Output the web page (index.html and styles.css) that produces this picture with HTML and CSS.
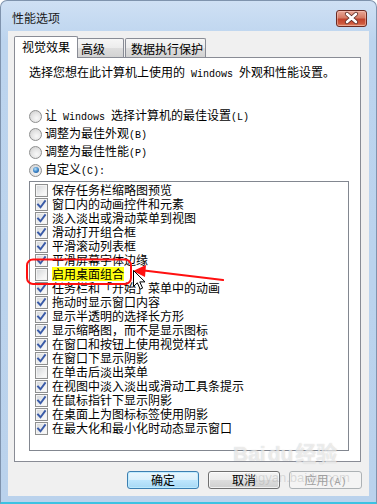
FILE: index.html
```html
<!DOCTYPE html>
<html lang="zh-CN">
<head>
<meta charset="utf-8">
<title>性能选项</title>
<link rel="stylesheet" href="styles.css">
</head>
<body>
<div class="window">
  <div class="titlebar">
    <span class="title">性能选项</span>
    <div class="close">
      <svg width="31" height="17" viewBox="0 0 31 17">
        <path d="M11 4 L20 12 M20 4 L11 12" stroke="#5a2a24" stroke-width="4.2" stroke-linecap="round"/>
        <path d="M11 4 L20 12 M20 4 L11 12" stroke="#ffffff" stroke-width="2.6" stroke-linecap="round"/>
      </svg>
    </div>
  </div>
  <div class="client">
    <div class="tabs">
      <div class="tab active">视觉效果</div>
      <div class="tab t2">高级</div>
      <div class="tab t3">数据执行保护</div>
    </div>
    <div class="panel">
      <p class="desc">选择您想在此计算机上使用的<span class="lat"> Windows </span>外观和性能设置。</p>
      <div class="radios">
        <div class="radio"><span class="rb"></span><span class="lbl">让<span class="lat"> Windows </span>选择计算机的最佳设置<span class="lat">(L)</span></span></div>
        <div class="radio"><span class="rb"></span><span class="lbl">调整为最佳外观<span class="lat">(B)</span></span></div>
        <div class="radio"><span class="rb"></span><span class="lbl">调整为最佳性能<span class="lat">(P)</span></span></div>
        <div class="radio"><span class="rb on"></span><span class="lbl">自定义<span class="lat">(C):</span></span></div>
      </div>
      <div class="list">
        <div class="row"><span class="cb"></span>保存任务栏缩略图预览</div>
        <div class="row"><span class="cb"><svg class="ck" viewBox="0 0 11 11"><path d="M2 5.5 L4.5 8.2 L9 2.2"/></svg></span>窗口内的动画控件和元素</div>
        <div class="row"><span class="cb"><svg class="ck" viewBox="0 0 11 11"><path d="M2 5.5 L4.5 8.2 L9 2.2"/></svg></span>淡入淡出或滑动菜单到视图</div>
        <div class="row"><span class="cb"><svg class="ck" viewBox="0 0 11 11"><path d="M2 5.5 L4.5 8.2 L9 2.2"/></svg></span>滑动打开组合框</div>
        <div class="row"><span class="cb"><svg class="ck" viewBox="0 0 11 11"><path d="M2 5.5 L4.5 8.2 L9 2.2"/></svg></span>平滑滚动列表框</div>
        <div class="row"><span class="cb"><svg class="ck" viewBox="0 0 11 11"><path d="M2 5.5 L4.5 8.2 L9 2.2"/></svg></span>平滑屏幕字体边缘</div>
        <div class="row"><span class="cb"></span><span class="hl">启用桌面组合</span></div>
        <div class="row"><span class="cb"><svg class="ck" viewBox="0 0 11 11"><path d="M2 5.5 L4.5 8.2 L9 2.2"/></svg></span>任务栏和「开始」菜单中的动画</div>
        <div class="row"><span class="cb"><svg class="ck" viewBox="0 0 11 11"><path d="M2 5.5 L4.5 8.2 L9 2.2"/></svg></span>拖动时显示窗口内容</div>
        <div class="row"><span class="cb"><svg class="ck" viewBox="0 0 11 11"><path d="M2 5.5 L4.5 8.2 L9 2.2"/></svg></span>显示半透明的选择长方形</div>
        <div class="row"><span class="cb"><svg class="ck" viewBox="0 0 11 11"><path d="M2 5.5 L4.5 8.2 L9 2.2"/></svg></span>显示缩略图，而不是显示图标</div>
        <div class="row"><span class="cb"><svg class="ck" viewBox="0 0 11 11"><path d="M2 5.5 L4.5 8.2 L9 2.2"/></svg></span>在窗口和按钮上使用视觉样式</div>
        <div class="row"><span class="cb"><svg class="ck" viewBox="0 0 11 11"><path d="M2 5.5 L4.5 8.2 L9 2.2"/></svg></span>在窗口下显示阴影</div>
        <div class="row"><span class="cb"></span>在单击后淡出菜单</div>
        <div class="row"><span class="cb"><svg class="ck" viewBox="0 0 11 11"><path d="M2 5.5 L4.5 8.2 L9 2.2"/></svg></span>在视图中淡入淡出或滑动工具条提示</div>
        <div class="row"><span class="cb"><svg class="ck" viewBox="0 0 11 11"><path d="M2 5.5 L4.5 8.2 L9 2.2"/></svg></span>在鼠标指针下显示阴影</div>
        <div class="row"><span class="cb"><svg class="ck" viewBox="0 0 11 11"><path d="M2 5.5 L4.5 8.2 L9 2.2"/></svg></span>在桌面上为图标标签使用阴影</div>
        <div class="row"><span class="cb"><svg class="ck" viewBox="0 0 11 11"><path d="M2 5.5 L4.5 8.2 L9 2.2"/></svg></span>在最大化和最小化时动态显示窗口</div>
      </div>
    </div>
    <div class="buttons">
      <div class="btn default">确定</div>
      <div class="btn">取消</div>
      <div class="btn disabled">应用<span class="lat">(A)</span></div>
    </div>
  </div>

  <div class="watermark">
    <div class="wm-logo">Bai<span class="wm-du">du</span>经验</div>
    <div class="wm-url">jingyan.baidu.com</div>
  </div>

  <svg class="annot" width="377" height="504" viewBox="0 0 377 504">
    <rect x="27" y="259.5" width="104" height="24.5" rx="6" ry="6" fill="none" stroke="#ff1010" stroke-width="2"/>
    <path d="M144 270.5 L223 280" stroke="#ff1010" stroke-width="2.2" stroke-linecap="round"/>
    <path d="M133 271 L146 265 L145 277 Z" fill="#ff1010"/>
    <path d="M133.5 270.5 L133.5 286.5 L137.3 282.8 L140.2 289.2 L142.6 288.1 L139.8 281.9 L145 281.9 Z" fill="#ffffff" stroke="#000000" stroke-width="1" stroke-linejoin="miter"/>
  </svg>
</div>
</body>
</html>
```

FILE: styles.css
```css
html, body {
  margin: 0;
  padding: 0;
  background: #ffffff;
}

body {
  font-family: "Noto Sans CJK SC", "Noto Sans", sans-serif;
  font-size: 12px;
  color: #000000;
}

.lat {
  font-family: "Liberation Mono", "DejaVu Sans Mono", monospace;
  font-size: 10px;
}

.window {
  position: relative;
  width: 377px;
  height: 504px;
  box-sizing: border-box;
  border: 1px solid #7f93ad;
  border-bottom: 2px solid #3cc2e2;
  border-radius: 7px 7px 0 0;
  background: linear-gradient(#cfe0f4, #bcd4ee 40px, #bad2ec);
  display: flex;
  flex-direction: column;
  overflow: hidden;
}

.titlebar {
  height: 30px;
  box-sizing: border-box;
  padding: 4px 9px 0 11px;
  display: flex;
  align-items: center;
  justify-content: space-between;
}

.title {
  font-size: 12px;
  line-height: 14px;
  color: #1a1a1a;
}

.close {
  width: 31px;
  height: 17px;
  box-sizing: border-box;
  border: 1px solid #6b2a22;
  border-radius: 3px;
  background: linear-gradient(#e9a898, #d57a64 45%, #c0432c 55%, #cf5a3e 85%, #e09070);
  box-shadow: inset 0 0 0 1px rgba(255, 210, 200, 0.45);
  position: relative;
}

.close svg {
  position: absolute;
  left: -1px;
  top: -1px;
}

.client {
  margin: 0 7px;
  height: 465px;
  box-sizing: border-box;
  background: #f0f0f0;
  padding-top: 5px;
  display: flex;
  flex-direction: column;
}

.tabs {
  height: 21px;
  padding-left: 6px;
  display: flex;
  align-items: flex-end;
  position: relative;
  z-index: 1;
}

.tab {
  box-sizing: border-box;
  border: 1px solid #898c95;
  border-bottom: none;
  line-height: 14px;
  white-space: nowrap;
}

.tab.active {
  width: 64px;
  height: 22px;
  margin-bottom: -1px;
  padding: 3px 0 0 7px;
  background: #ffffff;
  border-radius: 2px 2px 0 0;
  position: relative;
  z-index: 2;
}

.tab.t2,
.tab.t3 {
  height: 19px;
  padding-top: 3px;
  background: linear-gradient(#f6f6f6, #ececec 50%, #dedede 50%, #d2d2d2);
  border-radius: 2px 2px 0 0;
}

.tab.t2 {
  width: 47px;
  margin-left: -1px;
  padding-left: 3px;
}

.tab.t3 {
  width: 81px;
  margin-left: 1px;
  padding-left: 5px;
}

.panel {
  margin: 0 8px 0 6px;
  height: 405px;
  box-sizing: border-box;
  border: 1px solid #898c95;
  background: #ffffff;
  padding: 5px 0 0 14px;
}

.desc {
  margin: 0;
  line-height: 18px;
  white-space: pre;
}

.radios {
  margin-top: 23px;
}

.radio {
  height: 18px;
  display: flex;
  align-items: center;
}

.lbl {
  white-space: pre;
  line-height: 18px;
}

.rb {
  width: 13px;
  height: 13px;
  box-sizing: border-box;
  border: 1px solid #8e8f8f;
  border-radius: 50%;
  background: radial-gradient(circle at 60% 65%, #f8f8f8 0%, #e6e6e6 45%, #c9c9c9 100%);
  margin-right: 3px;
  position: relative;
  flex: none;
}

.rb.on::after {
  content: "";
  position: absolute;
  left: 2.5px;
  top: 2.5px;
  width: 6px;
  height: 6px;
  border-radius: 50%;
  background: radial-gradient(circle at 40% 35%, #b7e2fb 0%, #3e86c8 50%, #14488a 100%);
}

.list {
  margin-top: 2px;
  width: 320px;
  height: 270px;
  box-sizing: border-box;
  border: 1px solid #828790;
  padding: 1px 0 0 5px;
  background: #ffffff;
}

.row {
  height: 14px;
  line-height: 14px;
  display: flex;
  align-items: center;
  white-space: nowrap;
}

.cb {
  width: 13px;
  height: 13px;
  box-sizing: border-box;
  border: 1px solid #8e8f8f;
  background: linear-gradient(135deg, #d2d5d8, #f4f4f4 70%, #fcfcfc);
  box-shadow: inset 0 0 0 1px #f4f4f4;
  margin-right: 4px;
  position: relative;
  flex: none;
}

.ck {
  position: absolute;
  left: 0;
  top: 0;
  width: 11px;
  height: 11px;
}

.ck path {
  fill: none;
  stroke: #3a5ba8;
  stroke-width: 1.9;
  stroke-linecap: square;
  stroke-linejoin: miter;
}

.hl {
  background: #ffff10;
  line-height: 14px;
}

.buttons {
  margin-top: 9px;
  padding-right: 7px;
  display: flex;
  justify-content: flex-end;
  gap: 9px;
}

.btn {
  width: 72px;
  height: 18px;
  box-sizing: border-box;
  border: 1px solid #707070;
  border-radius: 3px;
  background: linear-gradient(#f4f4f4, #ebebeb 50%, #dddddd 50%, #cfcfcf);
  box-shadow: inset 0 0 0 1px rgba(255, 255, 255, 0.7);
  text-align: center;
  line-height: 16px;
  white-space: nowrap;
}

.btn.default {
  border-color: #3c7fb1;
  background: linear-gradient(#eaf6fd, #d9f0fc 50%, #bee6fd 50%, #a7d9f5);
  box-shadow: inset 0 0 0 1px rgba(190, 235, 255, 0.9);
}

.btn.disabled {
  width: 73px;
  border-color: #adb2b5;
  background: #f4f4f4;
  color: #a0a0a0;
  box-shadow: none;
}

.watermark {
  position: absolute;
  left: 232px;
  top: 441px;
  pointer-events: none;
}

.wm-logo {
  font-family: "Liberation Sans", "Noto Sans CJK SC", sans-serif;
  font-size: 21px;
  font-weight: bold;
  line-height: 24px;
  color: rgba(255, 255, 255, 0.6);
  text-shadow: 0 0 1px rgba(140, 140, 140, 0.45);
  white-space: nowrap;
}

.wm-du {
  margin: 0 2px;
}

.wm-url {
  margin: 5px 0 0 12px;
  font-family: "Liberation Sans", sans-serif;
  font-size: 13px;
  line-height: 14px;
  color: rgba(150, 150, 150, 0.3);
  white-space: nowrap;
}

.annot {
  position: absolute;
  left: -1px;
  top: -1px;
  pointer-events: none;
}
```
